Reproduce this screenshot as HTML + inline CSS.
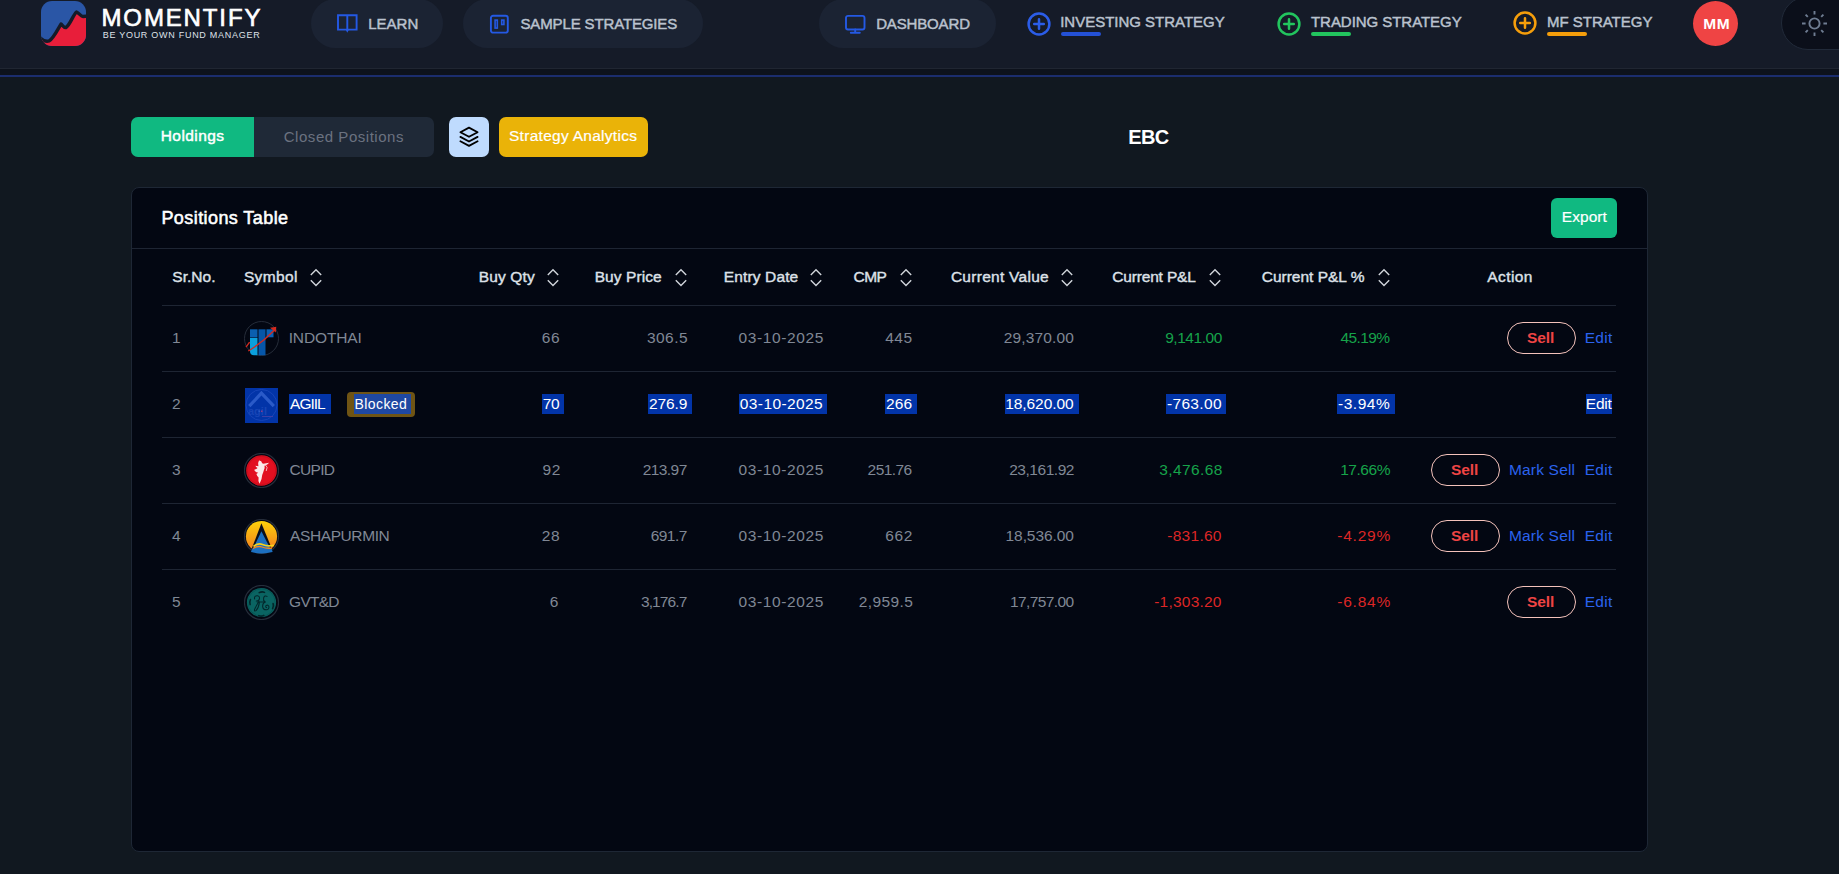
<!DOCTYPE html>
<html><head><meta charset="utf-8">
<style>
*{margin:0;padding:0;box-sizing:border-box}
html,body{width:1839px;height:874px;overflow:hidden;background:#111820;font-family:"Liberation Sans",sans-serif}
body{position:relative}
.abs{position:absolute}
.t{position:absolute;white-space:nowrap;line-height:1}
</style></head><body>
<div class="abs" style="left:0;top:0;width:1839px;height:68px;background:#151b28"></div>
<div class="abs" style="left:0;top:68px;width:1839px;height:1px;background:#202632"></div>
<div class="abs" style="left:0;top:69px;width:1839px;height:6px;background:#0d121c"></div>
<div class="abs" style="left:0;top:75px;width:1839px;height:2px;background:#1b2d6e"></div>
<svg class="abs" style="left:41px;top:1px" width="45" height="45" viewBox="0 0 45 45">
<defs><clipPath id="lc"><rect x="0" y="0" width="45" height="45" rx="11"/></clipPath></defs>
<g clip-path="url(#lc)">
<rect x="0" y="0" width="45" height="45" fill="#2a56a6"/>
<path d="M-2 36 C2 40 5 41 8 40 C12 38 17 28 20 23 C22 25 23 27 25 26.5 C29 24 32 14 35.5 11 C38 12 40 15.5 42 15.5 L47 15 L47 47 L-2 47 Z" fill="#e81e3a"/>
<path d="M-2 36 C2 40 5 41 8 40 C12 38 17 28 20 23 C22 25 23 27 25 26.5 C29 24 32 14 35.5 11 C38 12 40 15.5 42 15.5 L47 15" fill="none" stroke="#151b28" stroke-width="3.4" stroke-linejoin="round" stroke-linecap="round"/>
</g></svg>
<div class="t" style="left:101.48px;top:6.09px;font-size:24px;letter-spacing:1.874px;color:#ffffff;-webkit-text-stroke:0.65px #fff">MOMENTIFY</div>
<div class="t" style="left:102.70px;top:31.27px;font-size:9px;letter-spacing:0.722px;color:#dfe2e8;">BE YOUR OWN FUND MANAGER</div>
<div class="abs" style="left:311px;top:-1px;width:132px;height:49px;border-radius:25px;background:#1b2333"></div>
<div class="abs" style="left:463px;top:-1px;width:240px;height:49px;border-radius:25px;background:#1b2333"></div>
<div class="abs" style="left:819px;top:-1px;width:177px;height:49px;border-radius:25px;background:#1b2333"></div>
<svg class="abs" style="left:336px;top:13px" width="23" height="22" viewBox="0 0 23 22">
<path d="M2 2.2 H11.3 V16.6 H2 Z M11.3 2.2 H20.6 V16.6 H11.3 Z" fill="none" stroke="#2459e4" stroke-width="1.9" stroke-linejoin="miter"/>
<path d="M9.6 16.4 L11.3 19.8 L13 16.4 Z" fill="#2459e4"/>
</svg>
<div class="t" style="left:368.16px;top:16.02px;font-size:15px;letter-spacing:0.031px;color:#bac2ce;-webkit-text-stroke:0.45px #bac2ce;">LEARN</div>
<svg class="abs" style="left:489px;top:14px" width="21" height="21" viewBox="0 0 21 21">
<rect x="1.9" y="1.8" width="16.9" height="16.8" rx="2.2" fill="none" stroke="#2459e4" stroke-width="1.9"/>
<rect x="6.1" y="6.1" width="2.2" height="8" fill="none" stroke="#2459e4" stroke-width="1.6"/>
<rect x="12.7" y="6.1" width="2.2" height="4.4" fill="none" stroke="#2459e4" stroke-width="1.6"/>
</svg>
<div class="t" style="left:520.46px;top:16.32px;font-size:15px;letter-spacing:-0.135px;color:#bac2ce;-webkit-text-stroke:0.45px #bac2ce;">SAMPLE STRATEGIES</div>
<svg class="abs" style="left:844px;top:14px" width="23" height="21" viewBox="0 0 23 21">
<rect x="2" y="1.9" width="18.5" height="13.6" rx="2" fill="none" stroke="#2459e4" stroke-width="1.9"/>
<path d="M11.2 15.5 V18.6 M6.8 18.7 H15.8" fill="none" stroke="#2459e4" stroke-width="1.9" stroke-linecap="round"/>
</svg>
<div class="t" style="left:876.20px;top:16.12px;font-size:15px;letter-spacing:-0.152px;color:#bac2ce;-webkit-text-stroke:0.45px #bac2ce;">DASHBOARD</div>
<svg class="abs" style="left:1025.5px;top:10.5px" width="26" height="26" viewBox="0 0 26 26">
<circle cx="13" cy="13" r="10.4" fill="none" stroke="#2b5de8" stroke-width="2.5"/>
<path d="M13 8.2 V17.8 M8.2 13 H17.8" stroke="#2b5de8" stroke-width="2.5" stroke-linecap="round"/>
</svg>
<div class="t" style="left:1060.20px;top:14.12px;font-size:15px;letter-spacing:-0.015px;color:#bac2ce;-webkit-text-stroke:0.45px #bac2ce;">INVESTING STRATEGY</div>
<div class="abs" style="left:1061px;top:32px;width:40px;height:4px;border-radius:2px;background:#2451d6"></div>
<svg class="abs" style="left:1275.5px;top:10.5px" width="26" height="26" viewBox="0 0 26 26">
<circle cx="13" cy="13" r="10.4" fill="none" stroke="#22c55e" stroke-width="2.5"/>
<path d="M13 8.2 V17.8 M8.2 13 H17.8" stroke="#22c55e" stroke-width="2.5" stroke-linecap="round"/>
</svg>
<div class="t" style="left:1311.00px;top:14.12px;font-size:15px;letter-spacing:-0.048px;color:#bac2ce;-webkit-text-stroke:0.45px #bac2ce;">TRADING STRATEGY</div>
<div class="abs" style="left:1311px;top:32px;width:40px;height:4px;border-radius:2px;background:#22c55e"></div>
<svg class="abs" style="left:1511.5px;top:10.2px" width="26" height="26" viewBox="0 0 26 26">
<circle cx="13" cy="13" r="10.4" fill="none" stroke="#f59e0b" stroke-width="2.5"/>
<path d="M13 8.2 V17.8 M8.2 13 H17.8" stroke="#f59e0b" stroke-width="2.5" stroke-linecap="round"/>
</svg>
<div class="t" style="left:1546.96px;top:13.92px;font-size:15px;letter-spacing:-0.007px;color:#bac2ce;-webkit-text-stroke:0.45px #bac2ce;">MF STRATEGY</div>
<div class="abs" style="left:1547px;top:32px;width:40px;height:4px;border-radius:2px;background:#f59e0b"></div>
<div class="abs" style="left:1693px;top:1px;width:45px;height:45px;border-radius:50%;background:#ef4444"></div>
<div class="t" style="left:1703.20px;top:16.24px;font-size:15.5px;font-weight:bold;letter-spacing:0.600px;color:#ffffff;">MM</div>
<div class="abs" style="left:1781px;top:-4px;width:120px;height:54px;border-radius:27px;background:#0b0f1a;border:1px solid #212a39"></div>
<svg class="abs" style="left:1801px;top:10px" width="27" height="27" viewBox="0 0 27 27">
<circle cx="13.5" cy="13.5" r="5.1" fill="none" stroke="#6f7d92" stroke-width="1.9"/>
<g stroke="#6f7d92" stroke-width="1.9" stroke-linecap="butt">
<path d="M13.5 1 V4.6 M13.5 22.4 V26 M1 13.5 H4.6 M22.4 13.5 H26 M4.6 4.6 L6.8 6.8 M20.2 20.2 L22.4 22.4 M4.6 22.4 L6.8 20.2 M20.2 6.8 L22.4 4.6"/>
</g></svg>
<div class="abs" style="left:131px;top:117px;width:303px;height:40px;border-radius:7px;background:#1f2937;overflow:hidden"><div class="abs" style="left:0;top:0;width:123px;height:40px;background:#10b981"></div></div>
<div class="t" style="left:160.74px;top:128.44px;font-size:15.5px;letter-spacing:0.421px;color:#ffffff;-webkit-text-stroke:0.45px #ffffff;">Holdings</div>
<div class="t" style="left:283.74px;top:128.52px;font-size:15px;letter-spacing:0.536px;color:#6b7280;">Closed Positions</div>
<div class="abs" style="left:449px;top:117px;width:40px;height:40px;border-radius:7px;background:#bfdbfe"></div>
<svg class="abs" style="left:457px;top:125px" width="24" height="24" viewBox="0 0 24 24">
<path d="M12 2.6 L20.6 7.2 L12 11.8 L3.4 7.2 Z" fill="none" stroke="#000" stroke-width="1.8" stroke-linejoin="round"/>
<path d="M3.4 11.9 L12 16.5 L20.6 11.9" fill="none" stroke="#000" stroke-width="1.8" stroke-linecap="round" stroke-linejoin="round"/>
<path d="M3.4 16.3 L12 20.9 L20.6 16.3" fill="none" stroke="#000" stroke-width="1.8" stroke-linecap="round" stroke-linejoin="round"/>
</svg>
<div class="abs" style="left:499px;top:117px;width:149px;height:40px;border-radius:7px;background:#eab308"></div>
<div class="t" style="left:509.00px;top:128.44px;font-size:15.5px;letter-spacing:0.279px;color:#ffffff;-webkit-text-stroke:0.2px #ffffff;">Strategy Analytics</div>
<div class="t" style="left:1128.20px;top:127.23px;font-size:20px;font-weight:bold;letter-spacing:-0.600px;color:#ffffff;">EBC</div>
<div class="abs" style="left:131px;top:187px;width:1517px;height:665px;background:#030712;border:1px solid #1e2735;border-radius:8px"></div>
<div class="abs" style="left:132px;top:248px;width:1515px;height:1px;background:#1e2533"></div>
<div class="t" style="left:161.44px;top:208.74px;font-size:18px;letter-spacing:0.421px;color:#ffffff;-webkit-text-stroke:0.55px #ffffff;">Positions Table</div>
<div class="abs" style="left:1551px;top:198px;width:66px;height:40px;border-radius:6px;background:#10b981"></div>
<div class="t" style="left:1561.80px;top:209.44px;font-size:15.5px;letter-spacing:0.060px;color:#ffffff;-webkit-text-stroke:0.2px #ffffff;">Export</div>
<div class="t" style="left:172.36px;top:269.14px;font-size:15.5px;letter-spacing:0.010px;color:#dde1e8;-webkit-text-stroke:0.4px #dde1e8;">Sr.No.</div>
<div class="t" style="left:243.92px;top:269.14px;font-size:15.5px;letter-spacing:0.352px;color:#dde1e8;-webkit-text-stroke:0.4px #dde1e8;">Symbol</div>
<svg class="abs" style="left:307.7px;top:268px" width="16" height="20" viewBox="0 0 16 20">
<path d="M2.8 7 L8 1.8 L13.2 7 M2.8 12.2 L8 17.4 L13.2 12.2" fill="none" stroke="#d1d5db" stroke-width="1.4"/>
</svg>
<div class="t" style="left:478.70px;top:269.14px;font-size:15.5px;letter-spacing:0.145px;color:#dde1e8;-webkit-text-stroke:0.4px #dde1e8;">Buy Qty</div>
<svg class="abs" style="left:544.7px;top:268px" width="16" height="20" viewBox="0 0 16 20">
<path d="M2.8 7 L8 1.8 L13.2 7 M2.8 12.2 L8 17.4 L13.2 12.2" fill="none" stroke="#d1d5db" stroke-width="1.4"/>
</svg>
<div class="t" style="left:594.64px;top:269.14px;font-size:15.5px;letter-spacing:0.097px;color:#dde1e8;-webkit-text-stroke:0.4px #dde1e8;">Buy Price</div>
<svg class="abs" style="left:672.7px;top:268px" width="16" height="20" viewBox="0 0 16 20">
<path d="M2.8 7 L8 1.8 L13.2 7 M2.8 12.2 L8 17.4 L13.2 12.2" fill="none" stroke="#d1d5db" stroke-width="1.4"/>
</svg>
<div class="t" style="left:723.80px;top:269.14px;font-size:15.5px;letter-spacing:0.131px;color:#dde1e8;-webkit-text-stroke:0.4px #dde1e8;">Entry Date</div>
<svg class="abs" style="left:807.7px;top:268px" width="16" height="20" viewBox="0 0 16 20">
<path d="M2.8 7 L8 1.8 L13.2 7 M2.8 12.2 L8 17.4 L13.2 12.2" fill="none" stroke="#d1d5db" stroke-width="1.4"/>
</svg>
<div class="t" style="left:853.60px;top:269.14px;font-size:15.5px;letter-spacing:-0.572px;color:#dde1e8;-webkit-text-stroke:0.4px #dde1e8;">CMP</div>
<svg class="abs" style="left:897.7px;top:268px" width="16" height="20" viewBox="0 0 16 20">
<path d="M2.8 7 L8 1.8 L13.2 7 M2.8 12.2 L8 17.4 L13.2 12.2" fill="none" stroke="#d1d5db" stroke-width="1.4"/>
</svg>
<div class="t" style="left:950.92px;top:269.14px;font-size:15.5px;letter-spacing:0.271px;color:#dde1e8;-webkit-text-stroke:0.4px #dde1e8;">Current Value</div>
<svg class="abs" style="left:1058.5px;top:268px" width="16" height="20" viewBox="0 0 16 20">
<path d="M2.8 7 L8 1.8 L13.2 7 M2.8 12.2 L8 17.4 L13.2 12.2" fill="none" stroke="#d1d5db" stroke-width="1.4"/>
</svg>
<div class="t" style="left:1112.18px;top:269.14px;font-size:15.5px;letter-spacing:-0.155px;color:#dde1e8;-webkit-text-stroke:0.4px #dde1e8;">Current P&amp;L</div>
<svg class="abs" style="left:1206.7px;top:268px" width="16" height="20" viewBox="0 0 16 20">
<path d="M2.8 7 L8 1.8 L13.2 7 M2.8 12.2 L8 17.4 L13.2 12.2" fill="none" stroke="#d1d5db" stroke-width="1.4"/>
</svg>
<div class="t" style="left:1261.70px;top:269.14px;font-size:15.5px;letter-spacing:-0.006px;color:#dde1e8;-webkit-text-stroke:0.4px #dde1e8;">Current P&amp;L %</div>
<svg class="abs" style="left:1375.5px;top:268px" width="16" height="20" viewBox="0 0 16 20">
<path d="M2.8 7 L8 1.8 L13.2 7 M2.8 12.2 L8 17.4 L13.2 12.2" fill="none" stroke="#d1d5db" stroke-width="1.4"/>
</svg>
<div class="t" style="left:1487.30px;top:269.14px;font-size:15.5px;letter-spacing:0.401px;color:#dde1e8;-webkit-text-stroke:0.4px #dde1e8;">Action</div>
<div class="abs" style="left:162px;top:305px;width:1454px;height:1px;background:#1e2533"></div>
<div class="abs" style="left:162px;top:371px;width:1454px;height:1px;background:#1e2533"></div>
<div class="abs" style="left:162px;top:437px;width:1454px;height:1px;background:#1e2533"></div>
<div class="abs" style="left:162px;top:503px;width:1454px;height:1px;background:#1e2533"></div>
<div class="abs" style="left:162px;top:569px;width:1454px;height:1px;background:#1e2533"></div>
<div class="t" style="left:172.00px;top:330.14px;font-size:15.5px;letter-spacing:0.000px;color:#808895;">1</div>
<svg class="abs" style="left:244px;top:320.5px" width="35" height="35" viewBox="0 0 35 35">
<circle cx="17.5" cy="17.5" r="17" fill="none" stroke="#262d3a" stroke-width="1"/>
<rect x="6" y="8.3" width="7.5" height="8.2" fill="#0b5fb0"/>
<path d="M6 17.1 H13.5 V34.3 H10 Q6 34.3 6 30 Z" fill="#0aa0dd"/>
<rect x="14.5" y="8.3" width="7" height="26" fill="#0656a8"/>
<rect x="22.5" y="8.3" width="7" height="8" fill="#0b62b6"/>
<path d="M4.3 30 Q18 22 30.5 9" fill="none" stroke="#d42a1f" stroke-width="1.35"/>
<path d="M2 26.2 L5.6 21.2" fill="none" stroke="#d42a1f" stroke-width="1.35"/>
<path d="M26 6.8 L32.3 5.8 L31.8 11.5 Z" fill="#d42a1f"/>
</svg>
<div class="t" style="left:288.64px;top:330.14px;font-size:15.5px;letter-spacing:-0.111px;color:#808895;">INDOTHAI</div>
<div class="t" style="left:541.66px;top:330.14px;font-size:15.5px;letter-spacing:0.600px;color:#808895;">66</div>
<div class="t" style="left:646.92px;top:330.14px;font-size:15.5px;letter-spacing:0.459px;color:#808895;">306.5</div>
<div class="t" style="left:738.56px;top:330.14px;font-size:15.5px;letter-spacing:0.602px;color:#808895;">03-10-2025</div>
<div class="t" style="left:885.14px;top:330.14px;font-size:15.5px;letter-spacing:0.600px;color:#808895;">445</div>
<div class="t" style="left:1003.80px;top:330.14px;font-size:15.5px;letter-spacing:0.131px;color:#808895;">29,370.00</div>
<div class="t" style="left:1165.20px;top:330.14px;font-size:15.5px;letter-spacing:-0.462px;color:#16a34a;">9,141.00</div>
<div class="t" style="left:1340.50px;top:330.14px;font-size:15.5px;letter-spacing:-0.622px;color:#16a34a;">45.19%</div>
<div class="t" style="left:1584.68px;top:330.14px;font-size:15.5px;letter-spacing:0.296px;color:#2b63ee;">Edit</div>
<div class="abs" style="left:1507px;top:322px;width:69px;height:32px;border:1.5px solid #f4c2bb;border-radius:16px"></div>
<div class="t" style="left:1527.02px;top:330.14px;font-size:15.5px;font-weight:bold;letter-spacing:-0.078px;color:#ef4444;">Sell</div>
<div class="t" style="left:172.00px;top:396.14px;font-size:15.5px;letter-spacing:0.000px;color:#808895;">2</div>
<svg class="abs" style="left:245px;top:387.8px" width="33" height="35" viewBox="0 0 33 35">
<rect x="0" y="0" width="33" height="35" fill="#0234a8"/>
<circle cx="16.5" cy="17" r="15.5" fill="none" stroke="#1644b8" stroke-width="1"/>
<path d="M4.3 18.2 L16.4 5.2 L28.8 18.2" fill="none" stroke="#2a5ac8" stroke-width="3.2" stroke-linejoin="miter"/>
<text x="3" y="26.5" font-family="Liberation Sans" font-size="11" font-weight="bold" fill="#1745b6">agil</text>
<rect x="13.5" y="22.5" width="1.5" height="1.5" fill="#2a5ac8"/><rect x="16" y="22.5" width="1.5" height="1.5" fill="#8a3a8a"/>
<path d="M17 28.5 H28" stroke="#3b3fa8" stroke-width="1"/>
</svg>
<div class="abs" style="left:289px;top:394px;width:42.0px;height:20px;background:#0234a8"></div>
<div class="abs" style="left:542.1px;top:394px;width:21.7px;height:20px;background:#0234a8"></div>
<div class="abs" style="left:647.9px;top:394px;width:43.8px;height:20px;background:#0234a8"></div>
<div class="abs" style="left:738.8px;top:394px;width:87.9px;height:20px;background:#0234a8"></div>
<div class="abs" style="left:885px;top:394px;width:32.0px;height:20px;background:#0234a8"></div>
<div class="abs" style="left:1005px;top:394px;width:73.6px;height:20px;background:#0234a8"></div>
<div class="abs" style="left:1165.8px;top:394px;width:59.9px;height:20px;background:#0234a8"></div>
<div class="abs" style="left:1336.9px;top:394px;width:57.8px;height:20px;background:#0234a8"></div>
<div class="abs" style="left:1585.9px;top:394px;width:26.2px;height:20px;background:#0234a8"></div>
<div class="abs" style="left:347px;top:392px;width:68px;height:25px;border-radius:4px;background:#6f5414"></div>
<div class="abs" style="left:354px;top:394px;width:57px;height:20px;background:#1f48a2"></div>
<div class="t" style="left:354.60px;top:397.38px;font-size:14px;letter-spacing:0.399px;color:#ffffff;">Blocked</div>
<div class="t" style="left:290.08px;top:396.14px;font-size:15.5px;letter-spacing:-1.016px;color:#ffffff;">AGIIL</div>
<div class="t" style="left:542.86px;top:396.14px;font-size:15.5px;letter-spacing:-0.600px;color:#ffffff;">70</div>
<div class="t" style="left:649.00px;top:396.14px;font-size:15.5px;letter-spacing:-0.121px;color:#ffffff;">276.9</div>
<div class="t" style="left:739.80px;top:396.14px;font-size:15.5px;letter-spacing:0.402px;color:#ffffff;">03-10-2025</div>
<div class="t" style="left:886.00px;top:396.14px;font-size:15.5px;letter-spacing:0.171px;color:#ffffff;">266</div>
<div class="t" style="left:1005.20px;top:396.14px;font-size:15.5px;letter-spacing:-0.064px;color:#ffffff;">18,620.00</div>
<div class="t" style="left:1167.00px;top:396.14px;font-size:15.5px;letter-spacing:0.322px;color:#ffffff;">-763.00</div>
<div class="t" style="left:1338.00px;top:396.14px;font-size:15.5px;letter-spacing:0.538px;color:#ffffff;">-3.94%</div>
<div class="t" style="left:1585.80px;top:396.14px;font-size:15.5px;letter-spacing:-0.237px;color:#ffffff;">Edit</div>
<div class="t" style="left:172.00px;top:462.14px;font-size:15.5px;letter-spacing:0.000px;color:#808895;">3</div>
<svg class="abs" style="left:244px;top:452.5px" width="35" height="35" viewBox="0 0 35 35">
<circle cx="17.5" cy="17.5" r="17" fill="none" stroke="#262d3a" stroke-width="1.2"/>
<circle cx="17.5" cy="17.5" r="15.3" fill="#e20f20"/>
<circle cx="17.5" cy="17.5" r="14.3" fill="none" stroke="#b80d1a" stroke-width="0.6"/>
<path d="M15 7.6 Q17.6 7.4 18.2 10.2 L19.5 10.8 Q22 10.3 25.2 9.8 Q23.5 12 20.5 12.8 Q21 14.8 20 16.8 Q19.3 19.5 18.2 22 Q18 26.5 15.6 30.8 Q13.8 27.8 14.6 24.6 Q13 23 12.4 21 L14.2 19.8 Q11.5 19.8 10.2 16.8 Q12.6 16.2 13.6 15 Q11.8 14.2 11.4 12.8 Q13.6 12.8 14.4 13.2 Q13.4 10.2 15 7.6 Z" fill="#fbeaea"/>
<path d="M21 11.4 Q24.6 14.2 22.2 18" fill="none" stroke="#f6caca" stroke-width="0.9"/>
</svg>
<div class="t" style="left:289.60px;top:462.14px;font-size:15.5px;letter-spacing:-0.731px;color:#808895;">CUPID</div>
<div class="t" style="left:542.46px;top:462.14px;font-size:15.5px;letter-spacing:0.600px;color:#808895;">92</div>
<div class="t" style="left:642.70px;top:462.14px;font-size:15.5px;letter-spacing:-0.561px;color:#808895;">213.97</div>
<div class="t" style="left:738.56px;top:462.14px;font-size:15.5px;letter-spacing:0.602px;color:#808895;">03-10-2025</div>
<div class="t" style="left:867.60px;top:462.14px;font-size:15.5px;letter-spacing:-0.561px;color:#808895;">251.76</div>
<div class="t" style="left:1009.20px;top:462.14px;font-size:15.5px;letter-spacing:-0.464px;color:#808895;">23,161.92</div>
<div class="t" style="left:1159.20px;top:462.14px;font-size:15.5px;letter-spacing:0.395px;color:#16a34a;">3,476.68</div>
<div class="t" style="left:1340.20px;top:462.14px;font-size:15.5px;letter-spacing:-0.466px;color:#16a34a;">17.66%</div>
<div class="t" style="left:1584.68px;top:462.14px;font-size:15.5px;letter-spacing:0.296px;color:#2b63ee;">Edit</div>
<div class="t" style="left:1508.92px;top:462.14px;font-size:15.5px;letter-spacing:0.191px;color:#2b63ee;">Mark Sell</div>
<div class="abs" style="left:1431px;top:454px;width:69px;height:32px;border:1.5px solid #f4c2bb;border-radius:16px"></div>
<div class="t" style="left:1451.02px;top:462.14px;font-size:15.5px;font-weight:bold;letter-spacing:-0.078px;color:#ef4444;">Sell</div>
<div class="t" style="left:172.00px;top:528.14px;font-size:15.5px;letter-spacing:0.000px;color:#808895;">4</div>
<svg class="abs" style="left:244px;top:518.5px" width="35" height="35" viewBox="0 0 35 35">
<defs><linearGradient id="ag" x1="0" y1="0" x2="0" y2="1"><stop offset="0" stop-color="#fdd20a"/><stop offset="1" stop-color="#f37a20"/></linearGradient></defs>
<circle cx="17.5" cy="17.5" r="17" fill="none" stroke="#262d3a" stroke-width="1.2"/>
<circle cx="17.5" cy="17.5" r="15.6" fill="url(#ag)"/>
<path d="M17.4 4.3 L29 32.6 Q17.5 35.5 6.6 32.6 Z" fill="#0b0f1a"/>
<path d="M17.4 12.3 L27 31 Q17.5 35 8.4 31 Z" fill="#1c6fc0"/>
<path d="M7 33 Q17.5 35.8 28.6 33 L27.6 29.5 L8 29.5 Z" fill="#1c6fc0"/>
<path d="M9.5 27.5 Q14 23.5 18.5 25.5 Q23 27.5 30 26.4" fill="none" stroke="#f5d21a" stroke-width="1.8"/>
<path d="M9 29.5 Q13.5 26.5 18 28 Q22.5 29.8 28 29" fill="none" stroke="#f08a22" stroke-width="1.3"/>
</svg>
<div class="t" style="left:290.08px;top:528.14px;font-size:15.5px;letter-spacing:-0.412px;color:#808895;">ASHAPURMIN</div>
<div class="t" style="left:541.66px;top:528.14px;font-size:15.5px;letter-spacing:0.600px;color:#808895;">28</div>
<div class="t" style="left:650.70px;top:528.14px;font-size:15.5px;letter-spacing:-0.546px;color:#808895;">691.7</div>
<div class="t" style="left:738.56px;top:528.14px;font-size:15.5px;letter-spacing:0.602px;color:#808895;">03-10-2025</div>
<div class="t" style="left:885.30px;top:528.14px;font-size:15.5px;letter-spacing:0.600px;color:#808895;">662</div>
<div class="t" style="left:1005.60px;top:528.14px;font-size:15.5px;letter-spacing:-0.094px;color:#808895;">18,536.00</div>
<div class="t" style="left:1167.28px;top:528.14px;font-size:15.5px;letter-spacing:0.275px;color:#dc2626;">-831.60</div>
<div class="t" style="left:1337.18px;top:528.14px;font-size:15.5px;letter-spacing:0.798px;color:#dc2626;">-4.29%</div>
<div class="t" style="left:1584.68px;top:528.14px;font-size:15.5px;letter-spacing:0.296px;color:#2b63ee;">Edit</div>
<div class="t" style="left:1508.92px;top:528.14px;font-size:15.5px;letter-spacing:0.191px;color:#2b63ee;">Mark Sell</div>
<div class="abs" style="left:1431px;top:520px;width:69px;height:32px;border:1.5px solid #f4c2bb;border-radius:16px"></div>
<div class="t" style="left:1451.02px;top:528.14px;font-size:15.5px;font-weight:bold;letter-spacing:-0.078px;color:#ef4444;">Sell</div>
<div class="t" style="left:172.00px;top:594.14px;font-size:15.5px;letter-spacing:0.000px;color:#808895;">5</div>
<svg class="abs" style="left:244px;top:584.5px" width="35" height="35" viewBox="0 0 35 35">
<circle cx="17.5" cy="17.5" r="17" fill="none" stroke="#262d3a" stroke-width="1.2"/>
<circle cx="17.5" cy="17.5" r="14.6" fill="#0a6462"/>
<circle cx="17.5" cy="17.5" r="13.6" fill="none" stroke="#074a4a" stroke-width="0.5"/>
<g fill="none" stroke="#03262a" stroke-width="1.6" stroke-linecap="round">
<path d="M15.2 7.6 Q18 6.2 20.5 7.4"/>
<path d="M29.1 18.6 Q29.9 21.2 28.6 23.6"/>
<path d="M14.8 30.6 Q17.3 31.8 19.8 30.4"/>
<path d="M6.1 19.6 Q5.3 17 6.4 14.6"/>
</g>
<g fill="none" stroke="#03262a" stroke-width="1.05" stroke-linecap="round">
<path d="M10.6 14 Q10 10.6 13.4 10.8 Q16 11.2 15.4 14 Q14.6 16.4 12.2 16"/>
<path d="M15 16.2 Q12 21 10.6 24.4 Q10 26.6 12 25.6 Q14.6 23 15.4 17.6"/>
<path d="M23 11.4 Q20.6 10 19.6 13 Q19 15.6 21 17 Q18.6 18 18.6 21.4 Q19 25 22.6 24.8 Q25.6 24 24.8 21.2 Q24 19.4 22 20.6 Q21.2 22 22.6 22.6"/>
<path d="M13.2 17 H21"/>
</g>
</svg>
<div class="t" style="left:289.12px;top:594.14px;font-size:15.5px;letter-spacing:-0.753px;color:#808895;">GVT&amp;D</div>
<div class="t" style="left:549.74px;top:594.14px;font-size:15.5px;letter-spacing:0.600px;color:#808895;">6</div>
<div class="t" style="left:641.00px;top:594.14px;font-size:15.5px;letter-spacing:-0.902px;color:#808895;">3,176.7</div>
<div class="t" style="left:738.56px;top:594.14px;font-size:15.5px;letter-spacing:0.602px;color:#808895;">03-10-2025</div>
<div class="t" style="left:858.70px;top:594.14px;font-size:15.5px;letter-spacing:0.405px;color:#808895;">2,959.5</div>
<div class="t" style="left:1010.08px;top:594.14px;font-size:15.5px;letter-spacing:-0.614px;color:#808895;">17,757.00</div>
<div class="t" style="left:1154.20px;top:594.14px;font-size:15.5px;letter-spacing:0.226px;color:#dc2626;">-1,303.20</div>
<div class="t" style="left:1337.18px;top:594.14px;font-size:15.5px;letter-spacing:0.798px;color:#dc2626;">-6.84%</div>
<div class="t" style="left:1584.68px;top:594.14px;font-size:15.5px;letter-spacing:0.296px;color:#2b63ee;">Edit</div>
<div class="abs" style="left:1507px;top:586px;width:69px;height:32px;border:1.5px solid #f4c2bb;border-radius:16px"></div>
<div class="t" style="left:1527.02px;top:594.14px;font-size:15.5px;font-weight:bold;letter-spacing:-0.078px;color:#ef4444;">Sell</div>
</body></html>
